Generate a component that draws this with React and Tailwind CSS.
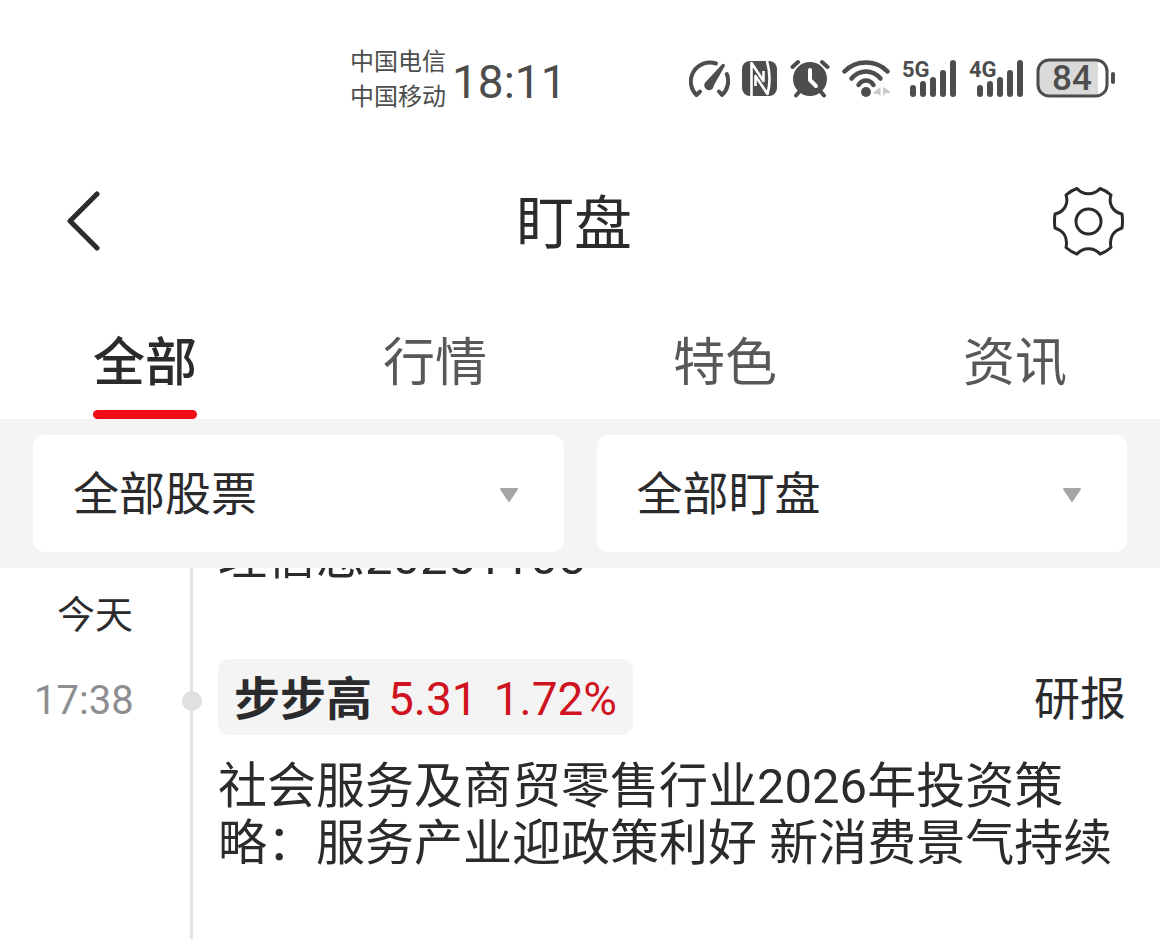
import { useState } from "react";

const TABS = ["全部", "行情", "特色", "资讯"];

const FILTERS = [
  { id: "stock", label: "股票", options: ["全部股票", "自选股票"] },
  { id: "watch", label: "盯盘", options: ["全部盯盘", "我的盯盘"] },
];

function GaugeIcon() {
  return (
    <svg width="42" height="40" viewBox="0 0 42 40" fill="none" stroke="#4d4d4d" strokeWidth="4" strokeLinecap="round" strokeLinejoin="round">
      <path d="M12 33.5 L8.5 37 A19 19 0 0 1 28 5.5" />
      <path d="M38.8 16 A19 19 0 0 1 34 37 L31 33.500" />
      <path d="M34 6.5 L17.8 23.8 A4.8 4.8 0 1 0 25.8 27.5 L36.8 8 A1.6 1.6 0 0 0 34 6.5 Z" fill="#4d4d4d" stroke="none" />
    </svg>
  );
}

function NfcIcon() {
  return (
    <svg width="36" height="40" viewBox="0 0 36 40" fill="none" strokeLinejoin="round">
      <rect x="0" y="3" width="35" height="35" rx="8" fill="#4d4d4d" />
      <path d="M9.500 38 V5 L21.500 23 V13" stroke="#fff" strokeWidth="2.600" />
      <path d="M25 3 C28 14 28 27 25.500 36 L13.500 18 V28" stroke="#fff" strokeWidth="2.600" />
    </svg>
  );
}

function AlarmIcon() {
  return (
    <svg width="40" height="40" viewBox="0 0 40 40" fill="none" strokeLinecap="round" strokeLinejoin="round">
      <circle cx="20" cy="21" r="17" fill="#4d4d4d" />
      <path d="M2.5 9 L8 4 M37.5 9 L32 4 M9 34 L6 37.5 M31 34 L34 37.5" stroke="#4d4d4d" strokeWidth="4" />
      <path d="M20 12 V22 L26 28" stroke="#fff" strokeWidth="4" />
    </svg>
  );
}

function WifiIcon() {
  return (
    <svg width="48" height="40" viewBox="0 0 48 40" fill="none">
      <g stroke="#4d4d4d" strokeWidth="4.500" strokeLinecap="round">
        <path d="M2.5 13.5 C14 1.5 34 1.5 45.5 13.5" />
        <path d="M9.5 20.5 C17.5 11 30.5 11 38.5 20.5" />
        <path d="M16.5 27 C20.5 21 27.5 21 31.5 27" />
      </g>
      <circle cx="24" cy="34" r="5" fill="#4d4d4d" />
      <path d="M38.500 29 V38 L36 36 H32 V34 Z M41 29 L47.5 33 V35 H44 L41 38 Z" fill="#c8c8c8" />
    </svg>
  );
}

function SignalIcon({ net }) {
  return (
    <div className="relative">
      <svg width="55" height="40" viewBox="0 0 55 40" fill="#4d4d4d">
        <rect x="8" y="27" width="6" height="12" rx="3" />
        <rect x="18" y="23" width="6" height="16" rx="3" />
        <rect x="28" y="19" width="6" height="20" rx="3" />
        <rect x="38" y="12" width="6" height="27" rx="3" />
        <rect x="48" y="2" width="6" height="37" rx="3" />
      </svg>
      <span className="absolute left-0 top-0 text-[22px] font-bold leading-[24px]">{net}</span>
    </div>
  );
}

function BatteryIcon({ level }) {
  return (
    <div className="relative">
      <svg width="80" height="40" viewBox="0 0 80 40">
        <path d="M13 2 H62 V38 H13 A11 11 0 0 1 2 27 V13 A11 11 0 0 1 13 2 Z" fill="#dadada" />
        <rect x="2" y="2" width="69" height="36" rx="11" fill="none" stroke="#4d4d4d" strokeWidth="3" />
        <rect x="75" y="14" width="4" height="12" rx="2" fill="#4d4d4d" />
      </svg>
      <span className="absolute left-0 top-0 w-[72px] text-center text-[35px] font-medium leading-[42px]">{level}</span>
    </div>
  );
}

function BackIcon() {
  return (
    <svg width="34" height="60" viewBox="0 0 34 60" fill="none" stroke="#2b2b2d" strokeWidth="5" strokeLinecap="round" strokeLinejoin="round">
      <path d="M31 3 L4 30 L31 57" />
    </svg>
  );
}

function GearIcon() {
  return (
    <svg width="72" height="72" viewBox="0 0 72 72" fill="none" stroke="#2b2b2d" strokeWidth="3" strokeLinejoin="round">
      <path d="M25 3.500 C31 10.500 42 10.500 48 3.500 Q54 5.500 59 10 C56 19 61 27 70 29 Q71 36 70 43 C61 46 57 53 59 62.500 Q54 67 48 69 C42 62 31 62 25 69 Q19 67 14 62.500 C16 53 12 46 3 43 Q2 36 3 29 C12 27 17 19 14 10 Q19 5.500 25 3.500 Z" />
      <circle cx="36.500" cy="36.500" r="12.500" />
    </svg>
  );
}

function StatusBar() {
  return (
    <div className="flex h-[156px] items-center justify-between pl-[350px] pr-[44px] text-[#4d4d4d]">
      <div className="flex items-center gap-[6px] pt-1">
        <div className="text-[24px] leading-[35px]">
          <p>中国电信</p>
          <p>中国移动</p>
        </div>
        <span className="pt-1 text-[46px] leading-[60px]">18:11</span>
      </div>
      <div className="flex items-center gap-3">
        <GaugeIcon />
        <NfcIcon />
        <AlarmIcon />
        <WifiIcon />
        <SignalIcon net="5G" />
        <SignalIcon net="4G" />
        <BatteryIcon level={84} />
      </div>
    </div>
  );
}

function Filter({ id, label, options }) {
  return (
    <div className="relative flex-1">
      <select id={id} aria-label={label}
        className="h-[117px] w-full appearance-none rounded-xl bg-white px-10 text-[46px] leading-[60px] text-[#2b2b2d]">
        {options.map((o) => <option key={o}>{o}</option>)}
      </select>
      <svg className="pointer-events-none absolute right-[45px] top-[52px]" width="20" height="16" viewBox="0 0 20 16">
        <path d="M2 2 H18 L10 14 Z" fill="#a6a6a6" stroke="#a6a6a6" strokeWidth="2" strokeLinejoin="round" />
      </svg>
    </div>
  );
}

export default function App() {
  const [tab, setTab] = useState("全部");

  return (
    <div className="flex min-h-screen flex-col bg-white font-['Roboto','Noto_Sans_CJK_SC',sans-serif] text-[#2b2b2d]" lang="zh-CN">
      <StatusBar />

      <header className="flex h-[130px] items-center justify-between pl-[66px] pr-[36px]">
        <button aria-label="返回"><BackIcon /></button>
        <h1 className="pt-[6px] pr-1 text-[58px] leading-[72px]">盯盘</h1>
        <button aria-label="设置"><GearIcon /></button>
      </header>

      <nav className="grid grid-cols-4">
        {TABS.map((t) => (
          <button key={t} onClick={() => setTab(t)}
            className={`flex flex-col items-center gap-3 pt-11 text-[52px] leading-[68px] ${t === tab ? "font-medium text-[#2b2b2d]" : "text-[#58585a]"}`}>
            {t}
            <span className={`h-[9px] w-[104px] rounded-full ${t === tab ? "bg-[#f20c18]" : "bg-transparent"}`} />
          </button>
        ))}
      </nav>

      <div className="flex gap-[33px] bg-[#f4f4f4] px-[33px] py-4">
        {FILTERS.map((f) => <Filter key={f.id} {...f} />)}
      </div>

      {/* Timeline */}
      <main className="flex flex-1">
        <div className="w-[190px] shrink-0">
          <p className="pt-[22px] text-center text-[38px] leading-[50px]">今天</p>
          <div className="mt-[23px] flex h-[76px] items-center pl-[34px]">
            <time className="text-[40px] leading-[50px] text-[#8e8e92]">17:38</time>
          </div>
        </div>

        <div className="relative min-w-0 flex-1 border-l-[3px] border-[#e3e3e3] pl-[25px] pr-[34px]">
          {/* entry cut off by the filter bar */}
          <div className="flex h-[18px] items-end overflow-hidden">
            <p className="text-[49px] leading-[57px]">理信息20251105</p>
          </div>

          <article className="mt-[73px]">
            <div className="flex items-center justify-between">
              <span className="absolute -left-[11px] mt-2 size-5 rounded-full bg-[#e0e0e0]" />
              <button className="flex h-[76px] items-center gap-4 rounded-xl bg-[#f4f4f4] px-4 pt-1 text-[46px] leading-[60px]">
                <b>步步高</b>
                <span className="text-[#d0141f]">5.31</span>
                <span className="text-[#d0141f]">1.72%</span>
              </button>
              <span className="pt-1 text-[46px] leading-[60px]">研报</span>
            </div>
            <p className="mt-[23px] text-[49px] leading-[57px]">
              社会服务及商贸零售行业2026年投资策略：服务产业迎政策利好 新消费景气持续
            </p>
          </article>
        </div>
      </main>
    </div>
  );
}
